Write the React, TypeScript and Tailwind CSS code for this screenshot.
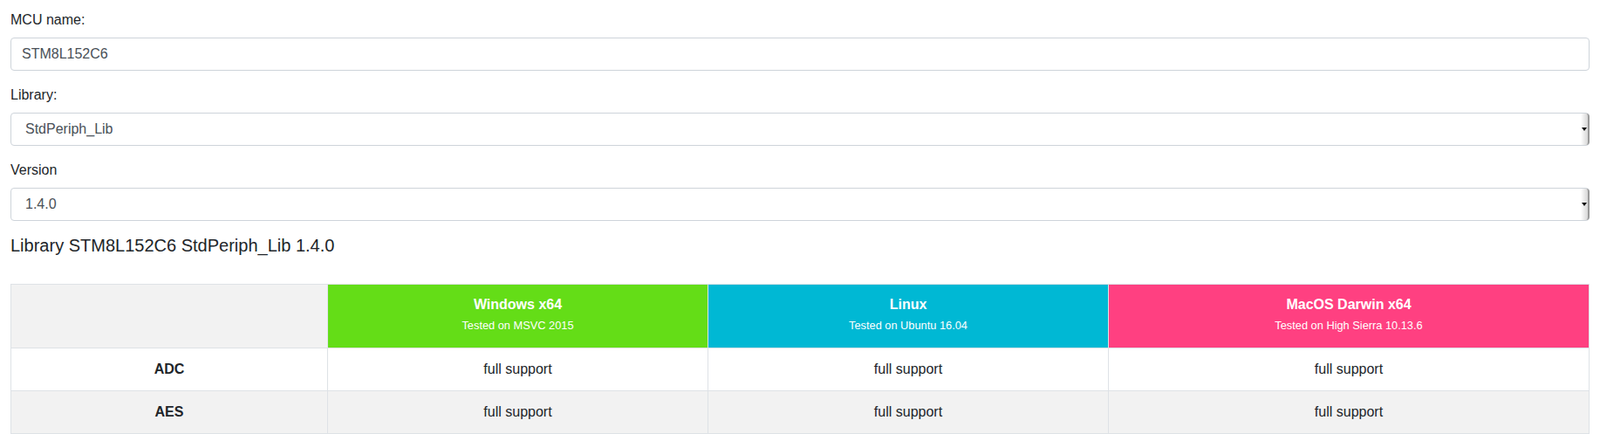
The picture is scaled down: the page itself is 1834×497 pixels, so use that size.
import { useState } from "react";

interface Platform {
  name: string;
  tested: string;
  color: string;
}

const platforms: Platform[] = [
  { name: "Windows x64", tested: "Tested on MSVC 2015", color: "bg-[#64dd17]" },
  { name: "Linux", tested: "Tested on Ubuntu 16.04", color: "bg-[#00b8d4]" },
  { name: "MacOS Darwin x64", tested: "Tested on High Sierra 10.13.6", color: "bg-[#ff4081]" },
];

const modules = ["ADC", "AES"];

const field =
  "block h-[38px] w-full rounded border border-[#ced4da] bg-white px-3 text-base text-[#495057] outline-none";

function Select({ value, options, onChange }: { value: string; options: string[]; onChange: (v: string) => void }) {
  return (
    <div className="relative">
      <select
        className={`${field} appearance-none pl-4`}
        value={value}
        onChange={(e) => onChange(e.target.value)}
      >
        {options.map((o) => (
          <option key={o}>{o}</option>
        ))}
      </select>
      {/* old-style native dropdown button */}
      <div className="pointer-events-none absolute top-px right-0 bottom-px flex w-[10px] items-center justify-center rounded-r border-r-2 border-[#9a9a9a] bg-gradient-to-r from-white to-[#d6d6d6]">
        <div className="h-0 w-0 border-x-[3px] border-t-[4px] border-x-transparent border-t-[#111]" />
      </div>
    </div>
  );
}

export default function App() {
  const [mcu, setMcu] = useState("STM8L152C6");
  const [lib, setLib] = useState("StdPeriph_Lib");
  const [version, setVersion] = useState("1.4.0");

  return (
    <div className="min-h-screen bg-white px-3 pt-[11px] font-['Liberation_Sans',Arial,sans-serif] text-base leading-6 text-[#212529]">
      <div className="mb-4">
        <label className="mb-2 block">MCU name:</label>
        <input className={field} value={mcu} onChange={(e) => setMcu(e.target.value)} />
      </div>

      <div className="mb-4">
        <label className="mb-2 block">Library:</label>
        <Select value={lib} options={["StdPeriph_Lib"]} onChange={setLib} />
      </div>

      <div className="mb-4">
        <label className="mb-2 block">Version</label>
        <Select value={version} options={["1.4.0"]} onChange={setVersion} />
      </div>

      <h5 className="mb-8 text-xl leading-6 font-normal">
        Library {mcu} {lib} {version}
      </h5>

      <table className="w-full table-fixed border-collapse border border-[#dee2e6] text-center">
        <colgroup>
          <col className="w-[363px]" />
          <col className="w-[436px]" />
          <col className="w-[459px]" />
          <col />
        </colgroup>
        <tbody>
          <tr className="h-[73px]">
            <td className="border border-[#dee2e6] bg-[#f2f2f2]"></td>
            {platforms.map((p) => (
              <th key={p.name} className={`border border-[#dee2e6] ${p.color} pb-1 text-white`}>
                <div className="font-bold">{p.name}</div>
                <div className="mt-0.5 text-[12.8px] leading-5 font-normal">{p.tested}</div>
              </th>
            ))}
          </tr>
          {modules.map((m, i) => (
            <tr key={m} className={`h-[49px] ${i % 2 === 1 ? "bg-[#f2f2f2]" : "bg-white"}`}>
              <td className="border border-[#dee2e6] font-bold">{m}</td>
              {platforms.map((p) => (
                <td key={p.name} className="border border-[#dee2e6]">
                  full support
                </td>
              ))}
            </tr>
          ))}
        </tbody>
      </table>
    </div>
  );
}
